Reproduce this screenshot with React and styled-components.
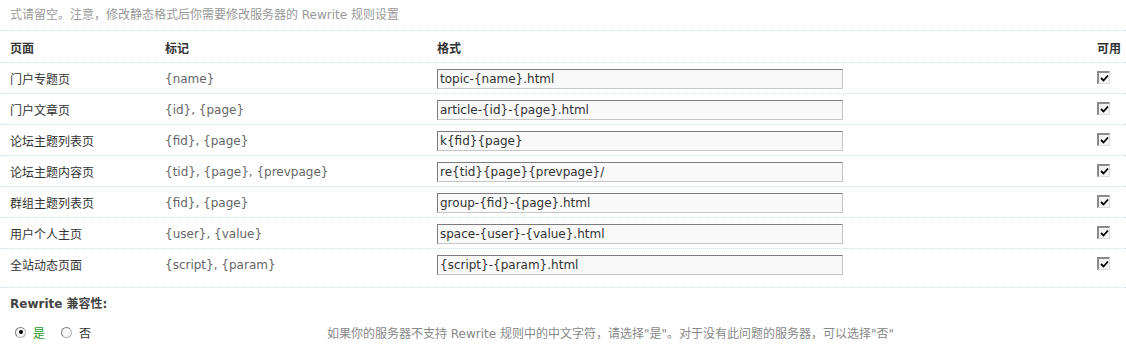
import styled, { createGlobalStyle } from "styled-components";

const GlobalStyle = createGlobalStyle`
  body {
    margin: 0;
    background: #fff;
    font-family: "DejaVu Sans", "Noto Sans CJK SC", sans-serif;
    font-size: 12px;
    color: #333;
  }
`;

const Page = styled.div`
  width: 1126px;
  height: 344px;
  overflow: hidden;
`;

const Tip = styled.div`
  height: 31px;
  line-height: 31px;
  padding-left: 10px;
  color: #999;
  border-bottom: 1px dotted #cddfec;
  box-sizing: border-box;
`;

const Row = styled.div`
  display: grid;
  grid-template-columns: 155px 272px 1fr 24px;
  align-items: center;
  white-space: nowrap;
  height: ${(p) => p.$h || 31}px;
  padding: 1px 5px ${(p) => (p.$h > 32 ? 8 : 0)}px 10px;
  border-bottom: 1px dotted #cddfec;
  box-sizing: border-box;
`;

const Head = styled.span`
  font-weight: bold;
  color: #333;
`;

const Label = styled.span`
  color: #333;
`;

const Tags = styled.span`
  color: #666;
`;

const Input = styled.input`
  width: 406px;
  height: 20px;
  box-sizing: border-box;
  margin: 0;
  padding: 0 2px;
  font: 12px "DejaVu Sans", sans-serif;
  color: #333;
  background: #f9f9f9;
  border: 1px solid #c6c6c6;
  border-top-color: #7c7c7c;
  border-left-color: #7c7c7c;
  outline: none;
`;

const Check = styled.span`
  display: inline-flex;
  align-items: center;
  justify-content: center;
  width: 13px;
  height: 13px;
  box-sizing: border-box;
  background: #f4f4f4;
  border: 1px solid #dcdcdc;
  border-top: 2px solid #8a8a8a;
  border-left: 2px solid #8a8a8a;
`;

const Compat = styled.div`
  padding: 9px 0 0 10px;
  height: 30px;
  box-sizing: border-box;
  font-weight: bold;
  color: #444;
  line-height: 14px;
`;

const OptionRow = styled.div`
  display: grid;
  grid-template-columns: 312px 1fr;
  align-items: center;
  height: 28px;
  padding-left: 15px;
`;

const Radios = styled.div`
  display: flex;
  align-items: center;
`;

const Radio = styled.span`
  position: relative;
  display: inline-block;
  width: 11px;
  height: 11px;
  box-sizing: border-box;
  border-radius: 50%;
  border: 1px solid #b4b4b4;
  border-top-color: #7f7f7f;
  border-left-color: #7f7f7f;
  background: #f6f6f6;
  margin-right: 7px;

  &::after {
    content: "";
    display: ${(p) => (p.$on ? "block" : "none")};
    position: absolute;
    left: 2.5px;
    top: 2.5px;
    width: 4px;
    height: 4px;
    border-radius: 50%;
    background: #000;
  }
`;

const Choice = styled.span`
  color: ${(p) => (p.$green ? "#2a9a2a" : "#333")};
  margin-right: ${(p) => (p.$green ? "16px" : "0")};
`;

const Desc = styled.span`
  color: #888;
`;

const rules = [
  ["门户专题页", "{name}", "topic-{name}.html"],
  ["门户文章页", "{id}, {page}", "article-{id}-{page}.html"],
  ["论坛主题列表页", "{fid}, {page}", "k{fid}{page}"],
  ["论坛主题内容页", "{tid}, {page}, {prevpage}", "re{tid}{page}{prevpage}/"],
  ["群组主题列表页", "{fid}, {page}", "group-{fid}-{page}.html"],
  ["用户个人主页", "{user}, {value}", "space-{user}-{value}.html"],
  ["全站动态页面", "{script}, {param}", "{script}-{param}.html"],
];

const CheckMark = () => (
  <svg width="9" height="9" viewBox="0 0 9 9">
    <path d="M1 4 L3.5 6.5 L8 1.5" fill="none" stroke="#000" strokeWidth="1.8" />
  </svg>
);

export default function App() {
  return (
    <Page>
      <GlobalStyle />
      <Tip>式请留空。注意，修改静态格式后你需要修改服务器的 Rewrite 规则设置</Tip>
      <Row $h={32}>
        <Head>页面</Head>
        <Head>标记</Head>
        <Head>格式</Head>
        <Head>可用</Head>
      </Row>
      {rules.map(([page, tags, format], i) => (
        <Row key={page} $h={i === rules.length - 1 ? 39 : 31}>
          <Label>{page}</Label>
          <Tags>{tags}</Tags>
          <div>
            <Input defaultValue={format} />
          </div>
          <div>
            <Check>
              <CheckMark />
            </Check>
          </div>
        </Row>
      ))}
      <Compat>Rewrite 兼容性:</Compat>
      <OptionRow>
        <Radios>
          <Radio $on />
          <Choice $green>是</Choice>
          <Radio />
          <Choice>否</Choice>
        </Radios>
        <Desc>如果你的服务器不支持 Rewrite 规则中的中文字符，请选择"是"。对于没有此问题的服务器，可以选择"否"</Desc>
      </OptionRow>
    </Page>
  );
}
